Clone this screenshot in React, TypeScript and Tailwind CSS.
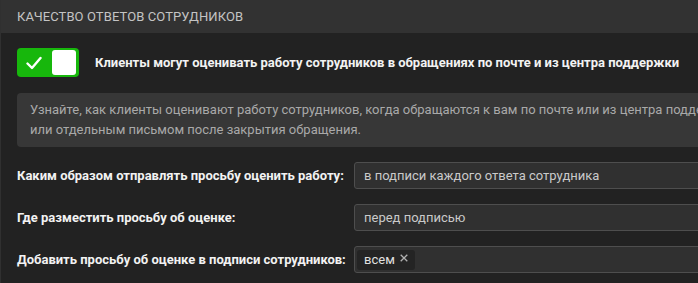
export default function App() {
  const rows = [
    { label: "Каким образом отправлять просьбу оценить работу:", value: "в подписи каждого ответа сотрудника" },
    { label: "Где разместить просьбу об оценке:", value: "перед подписью" },
  ];

  return (
    <div className="w-[698px] h-[283px] overflow-hidden bg-[#222222] border-l border-[#303030] font-['Roboto',sans-serif] text-[13px]">
      {/* Header */}
      <div className="h-[33px] flex items-center pl-4 bg-[#323232] text-[#c4c4c4] uppercase tracking-[0.1px]">
        Качество ответов сотрудников
      </div>

      <div className="w-[800px] pl-4">
        {/* Toggle */}
        <div className="flex items-center gap-4 mt-[15px]">
          <div className="w-[62px] h-[29px] rounded-[4px] bg-[#17b70c] flex items-center justify-between pl-[9px] pr-[3px]">
            <svg width="16" height="14" viewBox="0 0 16 14" fill="none">
              <path d="M1.5 7.5 L6 12 L14.5 2" stroke="white" strokeWidth="2.4" strokeLinecap="round" strokeLinejoin="round" />
            </svg>
            <div className="w-[24px] h-[25px] rounded-[3px] bg-white" />
          </div>
          <span className="font-bold text-[#f2f2f2]">
            Клиенты могут оценивать работу сотрудников в обращениях по почте и из центра поддержки
          </span>
        </div>

        {/* Info */}
        <div className="mt-4 w-[780px] rounded-[4px] bg-[#373737] px-[13px] py-[7px] leading-[20px] text-[#a9a9a9] whitespace-nowrap">
          Узнайте, как клиенты оценивают работу сотрудников, когда обращаются к вам по почте или из центра поддержки, в подписи ответа
          <br />
          или отдельным письмом после закрытия обращения.
        </div>

        {/* Settings */}
        <div className="grid grid-cols-[337px_1fr] gap-y-[15px] mt-[15px] items-center">
          {rows.map((r) => (
            <>
              <div key={r.label + "l"} className="font-bold text-[#f2f2f2]">
                {r.label}
              </div>
              <div key={r.label + "v"} className="h-[27px] flex items-center rounded-[3px] border border-[#4e4e4e] bg-[#303030] pl-[9px] text-[#cacaca]">
                {r.value}
              </div>
            </>
          ))}
          <div className="font-bold text-[#f2f2f2]">Добавить просьбу об оценке в подписи сотрудников:</div>
          <div className="h-[27px] flex items-center rounded-[3px] border border-[#4e4e4e] bg-[#303030] pl-[2px]">
            <span className="h-[20px] flex items-center gap-[5px] rounded-[3px] bg-[#242424] pl-[7px] pr-[7px] text-[#e0e0e0]">
              всем
              <svg width="8" height="8" viewBox="0 0 8 8" className="mb-[3px]">
                <path d="M0.7 0.7 L7.3 7.3 M7.3 0.7 L0.7 7.3" stroke="#b0b0b0" strokeWidth="1.3" />
              </svg>
            </span>
          </div>
        </div>
      </div>
    </div>
  );
}
